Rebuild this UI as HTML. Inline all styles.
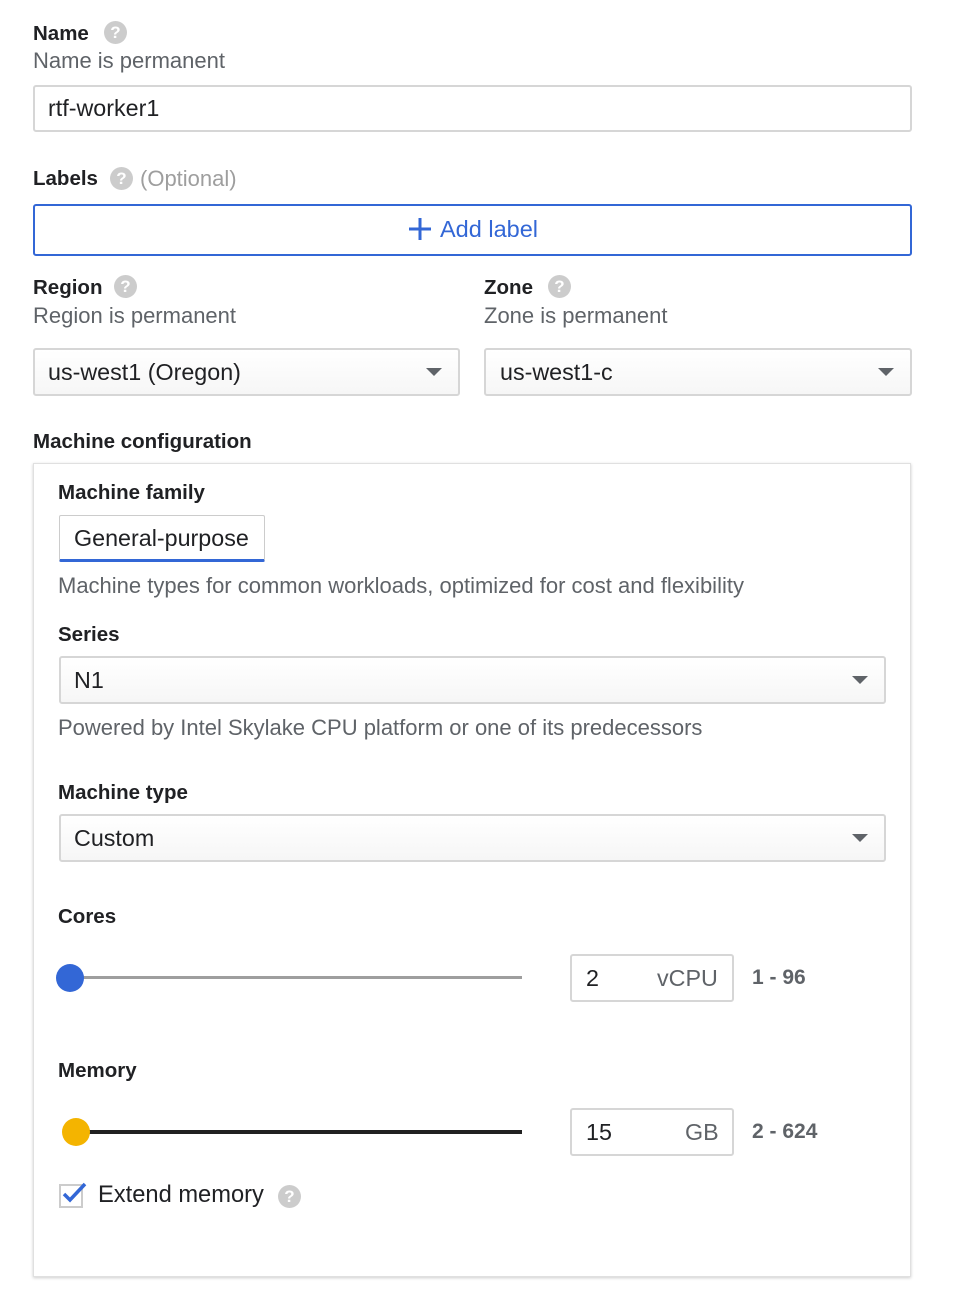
<!DOCTYPE html>
<html><head><meta charset="utf-8"><style>
*{box-sizing:border-box;margin:0;padding:0}
body{width:964px;height:1294px;background:#fff;font-family:"Liberation Sans",Arial,sans-serif;color:#202124;position:relative;overflow:hidden}
.a{position:absolute;white-space:nowrap}
.lb{font-weight:bold;font-size:20.5px;color:#202124}
.sub{font-size:22px;color:#5f6368}
.q{position:absolute;width:23px;height:23px;border-radius:50%;background:#ccc;color:#fff;font-weight:bold;font-size:17px;text-align:center;line-height:23px}
.box{position:absolute;border:2px solid #d6d6d6;border-radius:3px;background:#fff}
.sel{position:absolute;border:2px solid #d6d6d6;border-radius:3px;background:linear-gradient(#fff,#f6f6f6)}
.val{position:absolute;font-size:23.3px;color:#202124;white-space:nowrap}
.arr{position:absolute;width:0;height:0;border-left:8px solid transparent;border-right:8px solid transparent;border-top:8px solid #5f6368}
</style></head><body>
<div class="a lb" style="left:33px;top:22px">Name</div><div class="q" style="left:104px;top:21px">?</div>
<div class="a sub" style="left:33px;top:48px">Name is permanent</div>
<div class="box" style="left:33px;top:85px;width:879px;height:47px"></div>
<div class="val" style="left:48px;top:95px">rtf-worker1</div>

<div class="a lb" style="left:33px;top:167px">Labels</div><div class="q" style="left:110px;top:167px">?</div>
<div class="a sub" style="left:140px;top:166px;color:#9e9e9e">(Optional)</div>
<div style="position:absolute;left:33px;top:204px;width:879px;height:52px;border:2px solid #3367d6;border-radius:3px"></div>
<svg class="a" style="left:407px;top:216px" width="26" height="26"><path d="M13 2V24M2 13H24" stroke="#3367d6" stroke-width="3"/></svg>
<div class="a" style="left:440px;top:216px;font-size:23.5px;color:#3367d6">Add label</div>

<div class="a lb" style="left:33px;top:276px">Region</div><div class="q" style="left:114px;top:275px">?</div>
<div class="a sub" style="left:33px;top:303px">Region is permanent</div>
<div class="a lb" style="left:484px;top:276px">Zone</div><div class="q" style="left:548px;top:275px">?</div>
<div class="a sub" style="left:484px;top:303px">Zone is permanent</div>
<div class="sel" style="left:33px;top:348px;width:427px;height:48px"></div>
<div class="val" style="left:48px;top:359px">us-west1 (Oregon)</div><div class="arr" style="left:426px;top:368px"></div>
<div class="sel" style="left:484px;top:348px;width:428px;height:48px"></div>
<div class="val" style="left:500px;top:359px">us-west1-c</div><div class="arr" style="left:878px;top:368px"></div>

<div class="a lb" style="left:33px;top:430px">Machine configuration</div>
<div style="position:absolute;left:33px;top:463px;width:878px;height:814px;border:1px solid #e0e0e0;box-shadow:0 1px 3px rgba(0,0,0,.2)"></div>

<div class="a lb" style="left:58px;top:481px">Machine family</div>
<div style="position:absolute;left:59px;top:515px;width:206px;height:47px;border:1px solid #ccc;border-bottom:3px solid #3367d6;border-radius:2px;background:#fff"></div>
<div class="val" style="left:74px;top:525px">General-purpose</div>
<div class="a sub" style="left:58px;top:573px">Machine types for common workloads, optimized for cost and flexibility</div>

<div class="a lb" style="left:58px;top:623px">Series</div>
<div class="sel" style="left:59px;top:656px;width:827px;height:48px"></div>
<div class="val" style="left:74px;top:667px">N1</div><div class="arr" style="left:852px;top:676px"></div>
<div class="a sub" style="left:58px;top:715px">Powered by Intel Skylake CPU platform or one of its predecessors</div>

<div class="a lb" style="left:58px;top:781px">Machine type</div>
<div class="sel" style="left:59px;top:814px;width:827px;height:48px"></div>
<div class="val" style="left:74px;top:825px">Custom</div><div class="arr" style="left:852px;top:834px"></div>

<div class="a lb" style="left:58px;top:905px">Cores</div>
<div style="position:absolute;left:70px;top:976px;width:452px;height:3px;background:#9e9e9e"></div>
<div style="position:absolute;left:56px;top:964px;width:28px;height:28px;border-radius:50%;background:#3367d6"></div>
<div class="box" style="left:570px;top:954px;width:164px;height:48px"></div>
<div class="val" style="left:586px;top:965px">2</div>
<div class="val" style="left:657px;top:965px;color:#5f6368">vCPU</div>
<div class="a sub" style="left:752px;top:966px;font-weight:bold;font-size:21px">1 - 96</div>

<div class="a lb" style="left:58px;top:1059px">Memory</div>
<div style="position:absolute;left:76px;top:1130px;width:446px;height:4px;background:#212121"></div>
<div style="position:absolute;left:62px;top:1118px;width:28px;height:28px;border-radius:50%;background:#f4b400"></div>
<div class="box" style="left:570px;top:1108px;width:164px;height:48px"></div>
<div class="val" style="left:586px;top:1119px">15</div>
<div class="val" style="left:685px;top:1119px;color:#5f6368">GB</div>
<div class="a sub" style="left:752px;top:1120px;font-weight:bold;font-size:21px">2 - 624</div>

<div style="position:absolute;left:59px;top:1184px;width:24px;height:24px;border:2px solid #ccc;background:#fff"></div>
<svg class="a" style="left:60px;top:1181px" width="28" height="24"><path d="M4 13L10 19L25 3" fill="none" stroke="#3367d6" stroke-width="3.5"/></svg>
<div class="val" style="left:98px;top:1182px;font-size:23.7px">Extend memory</div><div class="q" style="left:278px;top:1185px">?</div>
</body></html>
